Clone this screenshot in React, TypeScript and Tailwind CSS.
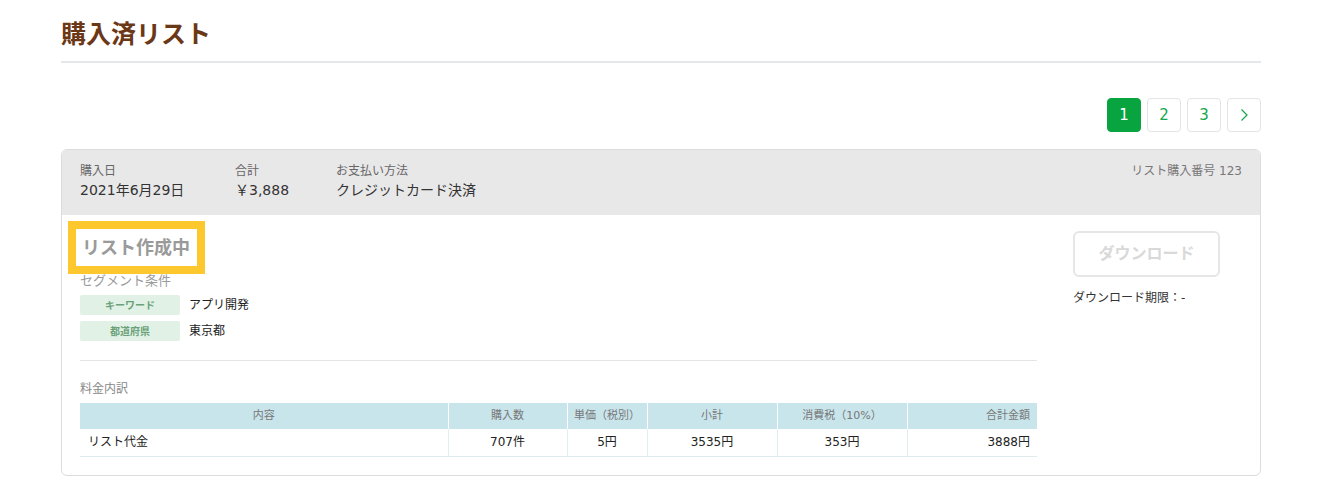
import React from 'react';

const font = { fontFamily: '"DejaVu Sans", "Noto Sans CJK JP", sans-serif' };

const cols = [
  { label: '内容', w: 368 },
  { label: '購入数', w: 119 },
  { label: '単価（税別）', w: 80 },
  { label: '小計', w: 130 },
  { label: '消費税（10%）', w: 130 },
  { label: '合計金額', w: 130 },
];

const row = ['リスト代金', '707件', '5円', '3535円', '353円', '3888円'];

const conditions = [
  { tag: 'キーワード', value: 'アプリ開発' },
  { tag: '都道府県', value: '東京都' },
];

function Pager() {
  const base = 'w-[34px] h-[34px] rounded-[4px] border flex items-center justify-center text-[15px]';
  return (
    <div className="flex justify-end gap-[6px] mt-[35px]">
      <button className={`${base} bg-[#08a43f] border-[#08a43f] text-white`}>1</button>
      <button className={`${base} bg-white border-[#e4e4e4] text-[#13a84a]`}>2</button>
      <button className={`${base} bg-white border-[#e4e4e4] text-[#13a84a]`}>3</button>
      <button className={`${base} bg-white border-[#e4e4e4] text-[#13a84a]`}>
        <svg width="9" height="14" viewBox="0 0 9 14" fill="none">
          <path d="M1.5 1.5L7 7L1.5 12.5" stroke="#13a84a" strokeWidth="1.2" />
        </svg>
      </button>
    </div>
  );
}

export default function App() {
  return (
    <div className="bg-white min-h-[500px]" style={font}>
      <div className="w-[1200px] ml-[61px]">
        <h1 className="pt-[17px] pb-[8px] leading-[36px] text-[25px] font-bold text-[#6b3817] border-b-2 border-[#e4e7eb]">
          購入済リスト
        </h1>

        <Pager />

        <div className="mt-[17px] border border-[#dcdcdc] rounded-[6px] overflow-hidden">
          {/* header */}
          <div className="h-[65px] bg-[#e9e8e9] px-[18px] pt-[12px] flex">
            <div className="w-[155px]">
              <div className="text-[12px] leading-[18px] text-[#666]">購入日</div>
              <div className="text-[14px] leading-[20px] text-[#333]">2021年6月29日</div>
            </div>
            <div className="w-[101px]">
              <div className="text-[12px] leading-[18px] text-[#666]">合計</div>
              <div className="text-[14px] leading-[20px] text-[#333]">￥3,888</div>
            </div>
            <div className="flex-1">
              <div className="text-[12px] leading-[18px] text-[#666]">お支払い方法</div>
              <div className="text-[14px] leading-[20px] text-[#333]">クレジットカード決済</div>
            </div>
            <div className="text-[12px] leading-[18px] text-[#777]">リスト購入番号 123</div>
          </div>

          {/* body */}
          <div className="flex px-[18px] pb-[18px]">
            <div className="w-[957px]">
              <div className="pt-[14px]">
                <h2 className="inline-block ml-[-4px] pl-[6px] pr-[7px] h-[37px] leading-[37px] text-[18px] font-bold text-[#9a9a9a] outline-8 outline-[#fdc82e] bg-white">
                  リスト作成中
                </h2>
              </div>
              <div className="mt-[6px] text-[13px] leading-[18px] text-[#9a9a9a]">セグメント条件</div>
              <div className="mt-[5px] flex flex-col gap-[6px]">
                {conditions.map(c => (
                  <div key={c.tag} className="flex items-center">
                    <span className="w-[100px] h-[20px] rounded-[2px] bg-[#e2f1e5] text-[#6aa17a] text-[10px] font-bold flex items-center justify-center">
                      {c.tag}
                    </span>
                    <span className="ml-[9px] text-[12px] text-[#222]">{c.value}</span>
                  </div>
                ))}
              </div>

              <div className="mt-[19px] border-t border-[#e5e5e5]" />

              <div className="mt-[19px] text-[12px] leading-[18px] text-[#888]">料金内訳</div>
              <table className="mt-[5px] w-full table-fixed border-collapse">
                <colgroup>
                  {cols.map(c => <col key={c.label} style={{ width: c.w }} />)}
                </colgroup>
                <thead>
                  <tr className="h-[26px] bg-[#c9e5ec]">
                    {cols.map((c, i) => (
                      <th
                        key={c.label}
                        className={`font-normal text-[11px] text-[#777] border-l border-white first:border-l-0 ${i === 5 ? 'text-right pr-[7px]' : 'text-center'}`}
                      >
                        {c.label}
                      </th>
                    ))}
                  </tr>
                </thead>
                <tbody>
                  <tr className="h-[27px] border-b border-[#dfeaed]">
                    {row.map((v, i) => (
                      <td
                        key={i}
                        className={`text-[12px] text-[#222] border-l border-[#e3eef1] first:border-l-0 ${i === 0 ? 'text-left pl-[8px]' : i === 5 ? 'text-right pr-[7px]' : 'text-center'}`}
                      >
                        {v}
                      </td>
                    ))}
                  </tr>
                </tbody>
              </table>
            </div>

            <div className="ml-[36px] pt-[16px]">
              <button className="w-[147px] h-[46px] border-2 border-[#e6e6e6] rounded-[6px] text-[16px] font-bold text-[#d9d9d9] bg-white">
                ダウンロード
              </button>
              <div className="mt-[12px] text-[12px] leading-[18px] text-[#333]">ダウンロード期限：-</div>
            </div>
          </div>
        </div>
      </div>
    </div>
  );
}
